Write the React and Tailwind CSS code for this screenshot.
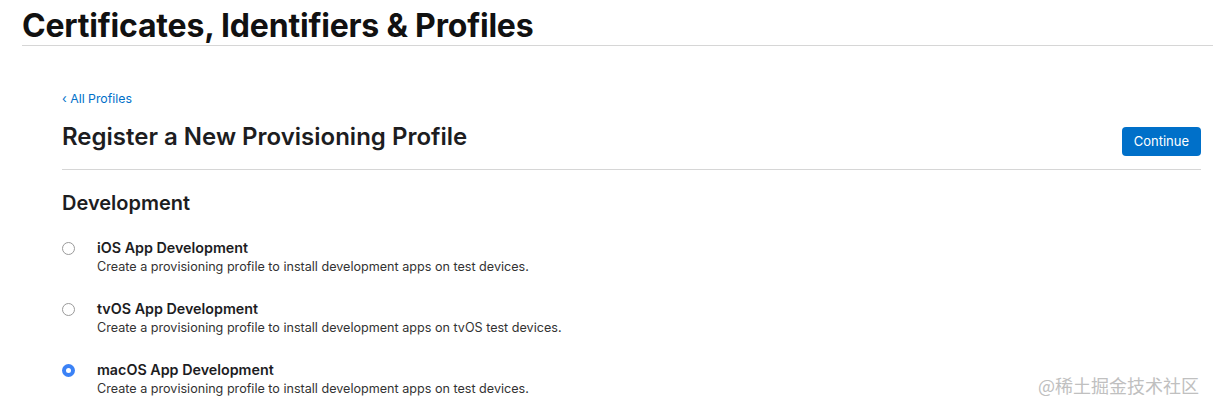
import React from "react";

const rows = [
  { title: "iOS App Development", desc: "Create a provisioning profile to install development apps on test devices.", checked: false },
  { title: "tvOS App Development", desc: "Create a provisioning profile to install development apps on tvOS test devices.", checked: false },
  { title: "macOS App Development", desc: "Create a provisioning profile to install development apps on test devices.", checked: true },
];

function Radio({ checked }) {
  if (checked) {
    return (
      <div className="w-[13px] h-[13px] rounded-full bg-[#3b82f6] flex items-center justify-center shrink-0">
        <div className="w-[5px] h-[5px] rounded-full bg-white" />
      </div>
    );
  }
  return <div className="w-[13px] h-[13px] rounded-full border border-[#9a9a9a] bg-white shrink-0" />;
}

export default function App() {
  return (
    <div className="relative w-[1213px] h-[412px] bg-white overflow-hidden text-[#111]" style={{ fontFamily: "Inter, 'Noto Sans', sans-serif" }}>
      <div className="pl-[22px] pt-[7px]">
        <h1 className="text-[32px] leading-[38px] font-bold tracking-[-0.2px] text-[#111]">Certificates, Identifiers &amp; Profiles</h1>
        <div className="mt-0 h-px bg-[#d6d6d6]" />
      </div>
      <div className="pl-[62px] pr-[12px] pt-[45px]">
        <div className="text-[12.3px] leading-[16px] text-[#0070c9]">‹ All Profiles</div>
        <div className="flex items-start justify-between mt-[15px]">
          <h2 className="text-[24px] leading-[30px] font-semibold text-[#1d1d1f]">Register a New Provisioning Profile</h2>
          <button className="mt-[5px] h-[29px] px-[12px] rounded-[4px] bg-[#0070c9] text-white text-[13px]">Continue</button>
        </div>
        <div className="mt-[13px] h-px bg-[#d6d6d6]" />
        <h3 className="mt-[20px] text-[20px] leading-[26px] font-semibold text-[#1d1d1f]">Development</h3>
        <div className="mt-[22px] flex flex-col gap-[23px]">
          {rows.map((r) => (
            <div key={r.title} className="flex items-start">
              <div className="pt-[4px] w-[35px]">
                <Radio checked={r.checked} />
              </div>
              <div>
                <div className="text-[14.3px] leading-[20px] font-semibold text-[#1d1d1f]">{r.title}</div>
                <div className="text-[12.6px] leading-[18px] text-[#333]">{r.desc}</div>
              </div>
            </div>
          ))}
        </div>
      </div>
      <div className="absolute right-[14px] bottom-[13px] text-[18px] text-[#c0c0c0]" style={{ fontFamily: "'Noto Sans CJK SC', sans-serif" }}>@稀土掘金技术社区</div>
    </div>
  );
}
